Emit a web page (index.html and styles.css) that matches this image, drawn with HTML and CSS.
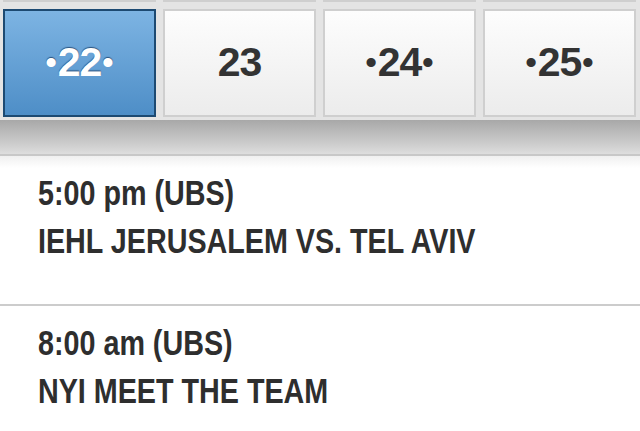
FILE: index.html
```html
<!DOCTYPE html>
<html>
<head>
<meta charset="utf-8">
<link rel="stylesheet" href="styles.css">
</head>
<body>
<div class="calendar">
  <div class="row prev">
    <div class="cell"></div>
    <div class="cell"></div>
    <div class="cell"></div>
    <div class="cell"></div>
  </div>
  <div class="row days">
    <div class="cell selected"><span class="dot">•</span>22<span class="dot">•</span></div>
    <div class="cell">23</div>
    <div class="cell"><span class="dot">•</span>24<span class="dot">•</span></div>
    <div class="cell"><span class="dot">•</span>25<span class="dot">•</span></div>
  </div>
</div>
<div class="band"></div>
<div class="events">
  <div class="event">
    <div class="text">
      <div class="time">5:00 pm (UBS)</div>
      <div class="title">IEHL JERUSALEM VS. TEL AVIV</div>
    </div>
  </div>
  <div class="event last">
    <div class="text">
      <div class="time">8:00 am (UBS)</div>
      <div class="title">NYI MEET THE TEAM</div>
    </div>
  </div>
</div>
</body>
</html>
```
FILE: styles.css
```css
html, body {
  margin: 0;
  padding: 0;
  background: #ffffff;
  font-family: "Liberation Sans", Arial, sans-serif;
  width: 640px;
  height: 431px;
  overflow: hidden;
}
.calendar {
  background: #e4e4e4;
  padding: 0 4px 3px 3px;
  display: flex;
  flex-direction: column;
  gap: 7px;
}
.row {
  display: grid;
  grid-template-columns: repeat(4, 1fr);
  column-gap: 7px;
}
.prev .cell {
  height: 1px;
  border-top: none;
}
.cell {
  box-sizing: border-box;
  border: 2px solid #cfcfcf;
  background: linear-gradient(#fdfdfd, #ececec);
}
.days .cell {
  height: 108px;
  display: flex;
  align-items: center;
  justify-content: center;
  font-size: 41px;
  font-weight: bold;
  color: #333333;
  letter-spacing: -1px;
  padding-bottom: 2px;
}
.days .dot {
  font-size: 32px;
  letter-spacing: 0;
  margin: 0 1px;
}
.days .cell.selected {
  background: linear-gradient(#7db4e3, #4e8ec7);
  border-color: #1d4a72;
  color: #ffffff;
  text-shadow: 0 -1px 1px rgba(0, 30, 70, 0.6);
}
.band {
  height: 34px;
  background: linear-gradient(#a8a8a8, #d2d2d2 80%, #dedede);
  border-bottom: 2px solid #c8c8c8;
}
.events {
  background: linear-gradient(#f0f0f0, #ffffff 12px);
}
.event {
  box-sizing: border-box;
  height: 150px;
  padding: 13px 0 0 38px;
  border-bottom: 2px solid #cccccc;
  color: #2e2e2e;
  font-weight: bold;
  font-size: 35px;
}
.event .text {
  transform: scaleX(0.82);
  transform-origin: left top;
  white-space: nowrap;
}
.event.last {
  height: 124px;
  border-bottom: none;
}
.event .time,
.event .title {
  line-height: 48px;
}
```
